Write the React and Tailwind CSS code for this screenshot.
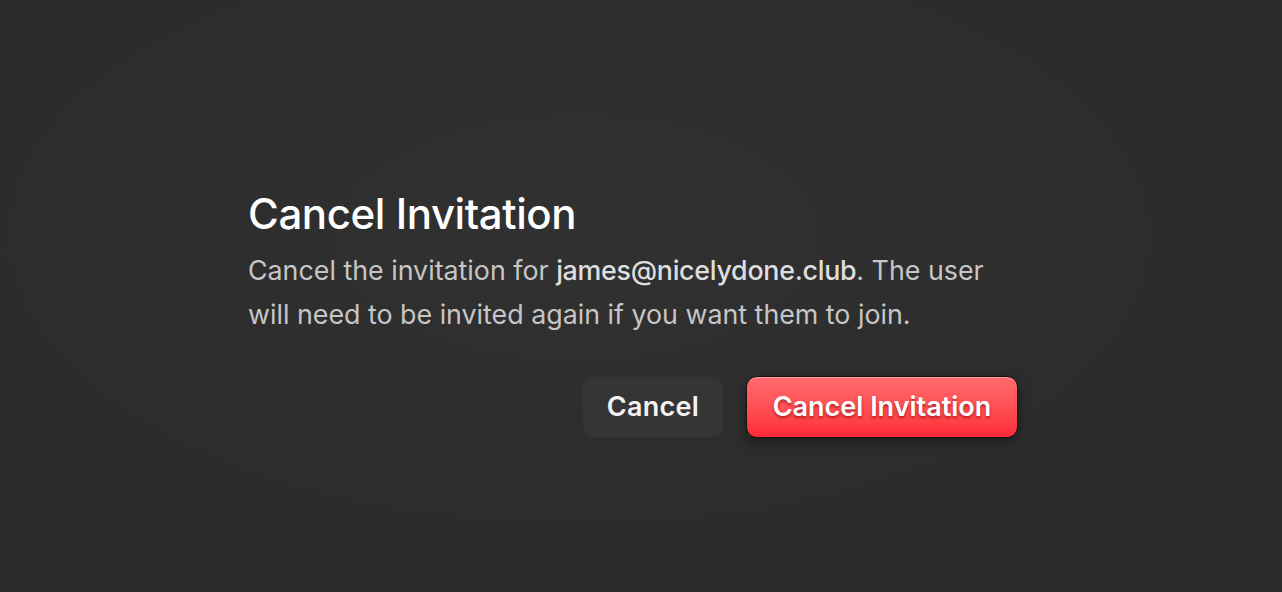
export default function App() {
  return (
    <div
      className="min-h-screen w-full bg-[#2d2d2d] bg-[radial-gradient(ellipse_at_45%_40%,#313131_0%,#2d2d2d_45%,#2a2a2a_100%)] pl-[248px] pt-[186px]"
      style={{ fontFamily: 'Inter, "Noto Sans", sans-serif' }}
    >
      <div className="flex w-[770px] flex-col">
        <h1 className="text-[42px] font-medium leading-[56px] tracking-[-0.01em] text-white">
          Cancel Invitation
        </h1>
        <p className="mt-[6px] text-[26.8px] leading-[44px] text-[#c6c6c6]">
          Cancel the invitation for <span className="font-medium tracking-[-0.01em] text-[#dedede]">james@nicelydone.club</span>. The user
          will need to be invited again if you want them to join.
        </p>
        <div className="mt-[40px] flex items-center justify-end gap-[23px]">
          <button
            type="button"
            className="h-[60px] w-[140px] rounded-[10px] bg-[#353535] text-[27px] font-semibold tracking-[0.01em] text-[#f2f2f2]"
          >
            Cancel
          </button>
          <button
            type="button"
            className="h-[62px] w-[272px] rounded-[11px] border-[1.5px] border-[#141414] bg-gradient-to-b from-[#ff6a6e] to-[#ff2a37] text-[27px] font-semibold text-white shadow-[inset_0_1px_0_rgba(255,255,255,0.3),0_4px_12px_rgba(0,0,0,0.4)] [text-shadow:0_2px_3px_rgba(120,0,10,0.6)]"
          >
            Cancel Invitation
          </button>
        </div>
      </div>
    </div>
  );
}
